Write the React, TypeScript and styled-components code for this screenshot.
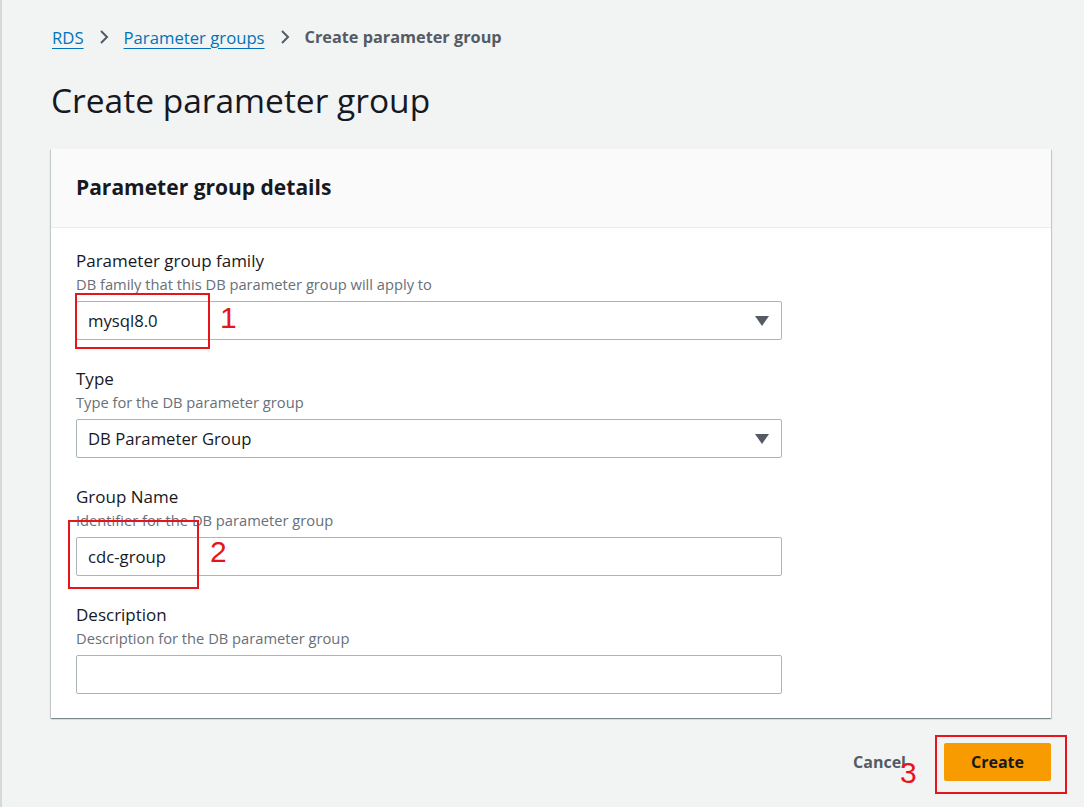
import React from 'react'
import styled, { createGlobalStyle } from 'styled-components'

const COLORS = {
    page: '#f2f3f3',
    link: '#0073bb',
    text: '#16191f',
    muted: '#687078',
    crumb: '#545b64',
    border: '#aab7b8',
    divider: '#eaeded',
    orange: '#f89b00',
    red: '#e8141c',
}

const GlobalStyle = createGlobalStyle`
  html, body {
    margin: 0;
    padding: 0;
    background: ${COLORS.page};
    font-family: "Open Sans", "Noto Sans", sans-serif;
    color: ${COLORS.text};
  }
`

const Page = styled.div`
  position: relative;
  width: 1084px;
  height: 807px;
  box-sizing: border-box;
  border-left: 2px solid #d5d9d9;
  padding: 24px 33px 0 49px;
  overflow: hidden;
`

const Breadcrumbs = styled.nav`
  display: flex;
  align-items: center;
  gap: 13px;
  height: 26px;
  font-size: 16.7px;
  margin-left: 1px;
`

const Crumb = styled.a`
  color: ${COLORS.link};
  text-decoration: underline;
  text-underline-offset: 4px;
`

const CurrentCrumb = styled.span`
  color: ${COLORS.crumb};
  font-weight: 700;
  font-size: 16.3px;
`

const Chevron = styled.svg`
  width: 14px;
  height: 18px;
  color: ${COLORS.crumb};
`

const Title = styled.h1`
  margin: 28px 0 0 0;
  font-size: 33.5px;
  font-weight: 400;
  line-height: 44px;
`

const Card = styled.section`
  margin-top: 27px;
  width: 1000px;
  background: #fff;
  box-shadow: 0 1px 1px 0 rgba(0, 28, 36, 0.3), 1px 1px 1px 0 rgba(0, 28, 36, 0.15), -1px 1px 1px 0 rgba(0, 28, 36, 0.15);
`

const CardHeader = styled.header`
  height: 79px;
  box-sizing: border-box;
  background: #fafafa;
  border-bottom: 1px solid ${COLORS.divider};
  display: flex;
  align-items: center;
  padding: 0 25px 3px;
  font-size: 21px;
  font-weight: 700;
`

const CardBody = styled.div`
  padding: 21px 25px 24px;
  display: flex;
  flex-direction: column;
  gap: 27px;
`

const Field = styled.div`
  display: flex;
  flex-direction: column;
`

const Label = styled.label`
  font-size: 17px;
  line-height: 24px;
`

const Hint = styled.div`
  font-size: 14.7px;
  line-height: 22px;
  color: ${COLORS.muted};
  margin-bottom: 6px;
`

const Box = styled.div`
  width: 706px;
  height: 39px;
  box-sizing: border-box;
  border: 1px solid ${COLORS.border};
  border-radius: 2px;
  display: flex;
  align-items: center;
  justify-content: space-between;
  padding: 0 12px 0 11px;
  font-size: 16.7px;
  background: #fff;
`

const Caret = styled.svg`
  width: 14px;
  height: 10px;
  color: #545b64;
`

const Footer = styled.div`
  display: flex;
  justify-content: flex-end;
  align-items: center;
  gap: 38px;
  margin-top: 25px;
`

const CancelButton = styled.span`
  font-size: 16px;
  font-weight: 700;
  color: ${COLORS.crumb};
`

const PrimaryButton = styled.button`
  width: 107px;
  height: 38px;
  border: none;
  border-radius: 2px;
  background: ${COLORS.orange};
  font-family: inherit;
  font-size: 16px;
  font-weight: 700;
  color: ${COLORS.text};
`

const Marker = styled.div<{ $x: number; $y: number; $w: number; $h: number }>`
  position: absolute;
  left: ${(p) => p.$x}px;
  top: ${(p) => p.$y}px;
  width: ${(p) => p.$w}px;
  height: ${(p) => p.$h}px;
  box-sizing: border-box;
  border: 2px solid ${COLORS.red};
  pointer-events: none;
`

const StepNumber = styled.span<{ $x: number; $y: number }>`
  position: absolute;
  left: ${(p) => p.$x}px;
  top: ${(p) => p.$y}px;
  font-family: "Liberation Sans", Arial, sans-serif;
  font-size: 30px;
  line-height: 30px;
  color: ${COLORS.red};
`

const ChevronIcon = () => (
    <Chevron viewBox="0 0 14 18" fill="none" stroke="currentColor" strokeWidth="2">
        <path d="M4 3l6 6-6 6" />
    </Chevron>
)

const CaretIcon = () => (
    <Caret viewBox="0 0 14 10">
        <path d="M0 0h14L7 10z" fill="currentColor" />
    </Caret>
)

const App: React.FC = () => {
    return (
        <>
            <GlobalStyle />
            <Page>
                <Breadcrumbs>
                    <Crumb>RDS</Crumb>
                    <ChevronIcon />
                    <Crumb>Parameter groups</Crumb>
                    <ChevronIcon />
                    <CurrentCrumb>Create parameter group</CurrentCrumb>
                </Breadcrumbs>
                <Title>Create parameter group</Title>
                <Card>
                    <CardHeader>Parameter group details</CardHeader>
                    <CardBody>
                        <Field>
                            <Label>Parameter group family</Label>
                            <Hint>DB family that this DB parameter group will apply to</Hint>
                            <Box>
                                <span>mysql8.0</span>
                                <CaretIcon />
                            </Box>
                        </Field>
                        <Field>
                            <Label>Type</Label>
                            <Hint>Type for the DB parameter group</Hint>
                            <Box>
                                <span>DB Parameter Group</span>
                                <CaretIcon />
                            </Box>
                        </Field>
                        <Field>
                            <Label>Group Name</Label>
                            <Hint>Identifier for the DB parameter group</Hint>
                            <Box>
                                <span>cdc-group</span>
                            </Box>
                        </Field>
                        <Field>
                            <Label>Description</Label>
                            <Hint>Description for the DB parameter group</Hint>
                            <Box />
                        </Field>
                    </CardBody>
                </Card>
                <Footer>
                    <CancelButton>Cancel</CancelButton>
                    <PrimaryButton>Create</PrimaryButton>
                </Footer>

                <Marker $x={73} $y={293} $w={135} $h={56} />
                <StepNumber $x={218} $y={303}>1</StepNumber>
                <Marker $x={66} $y={520} $w={131} $h={69} />
                <StepNumber $x={208} $y={537}>2</StepNumber>
                <Marker $x={933} $y={735} $w={132} $h={59} />
                <StepNumber $x={898} $y={758}>3</StepNumber>
            </Page>
        </>
    )
}

export default App
